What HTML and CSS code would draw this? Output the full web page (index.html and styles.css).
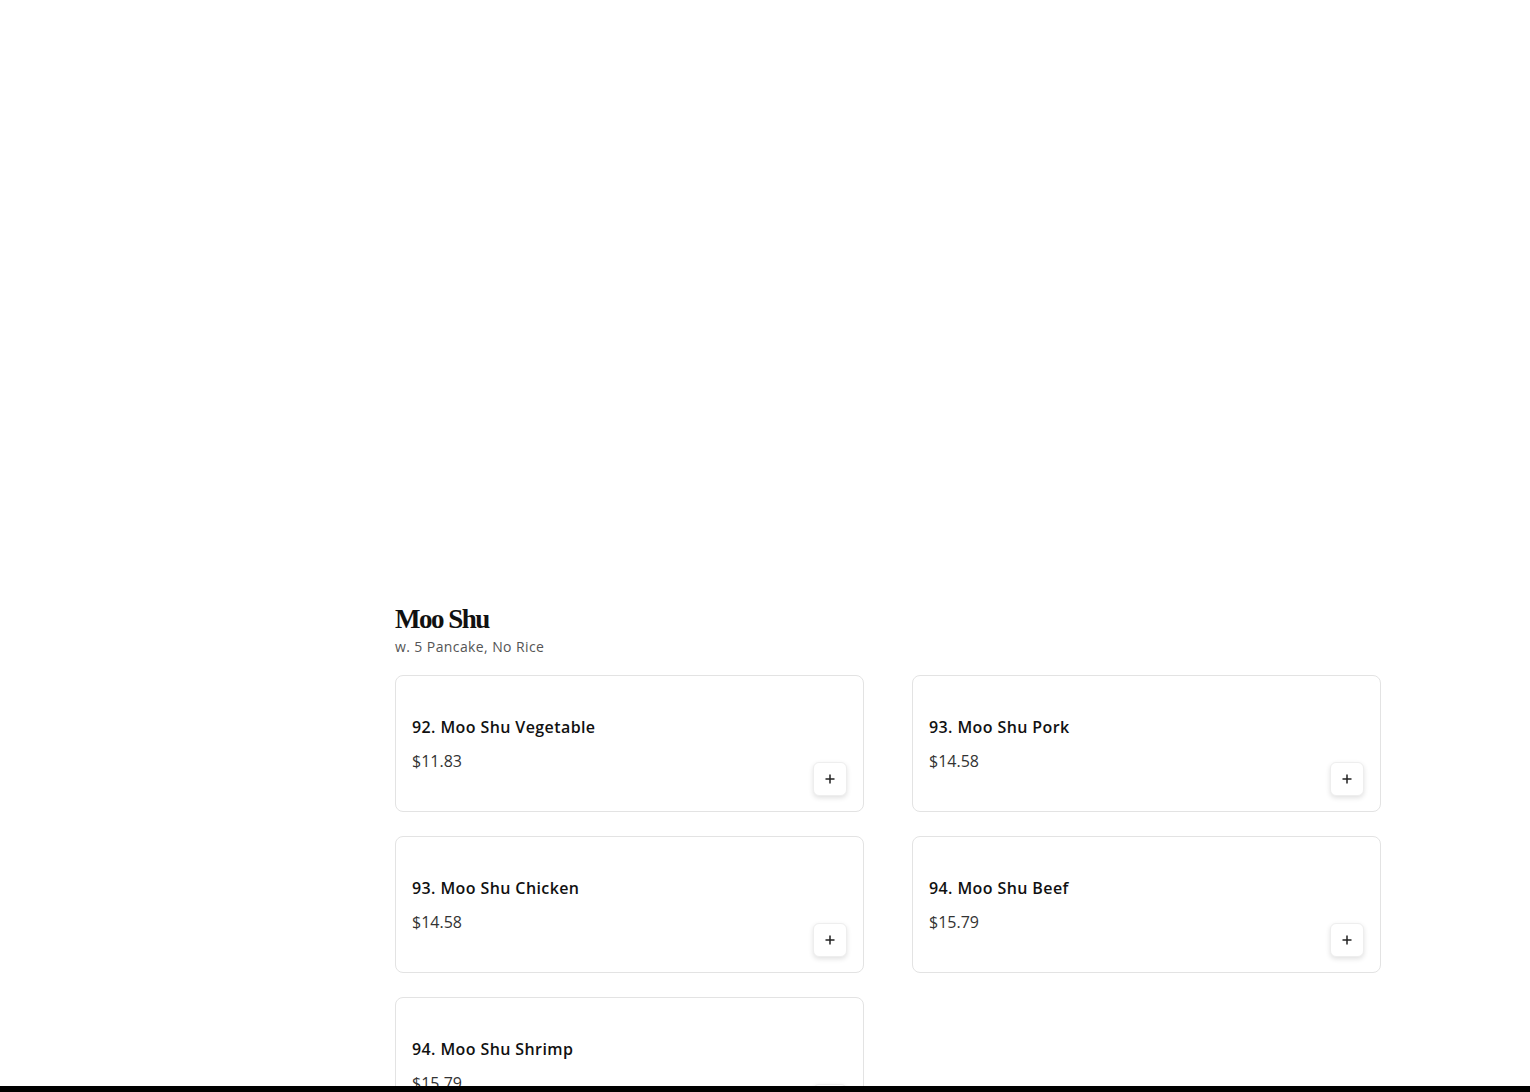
FILE: index.html
```html
<!DOCTYPE html>
<html lang="en">
<head>
    <meta charset="UTF-8">
    <meta name="viewport" content="width=device-width, initial-scale=1.0">
    <title>Menu - Moo Shu</title>
    <link rel="stylesheet" href="styles.css">
</head>
<body>
    <div class="hero"></div>

    <section class="category">
        <h2 class="category-title">Moo Shu</h2>
        <p class="category-note">w. 5 Pancake, No Rice</p>

        <div class="items">
            <div class="item">
                <div class="item-info">
                    <h3>92. Moo Shu Vegetable</h3>
                    <p class="price">$11.83</p>
                </div>
                <button class="add" aria-label="Add">
                    <svg width="12" height="12" viewBox="0 0 12 12"><path d="M6 1.5v9M1.5 6h9" stroke="#222" stroke-width="1.5" fill="none"/></svg>
                </button>
            </div>
            <div class="item">
                <div class="item-info">
                    <h3>93. Moo Shu Pork</h3>
                    <p class="price">$14.58</p>
                </div>
                <button class="add" aria-label="Add">
                    <svg width="12" height="12" viewBox="0 0 12 12"><path d="M6 1.5v9M1.5 6h9" stroke="#222" stroke-width="1.5" fill="none"/></svg>
                </button>
            </div>
            <div class="item">
                <div class="item-info">
                    <h3>93. Moo Shu Chicken</h3>
                    <p class="price">$14.58</p>
                </div>
                <button class="add" aria-label="Add">
                    <svg width="12" height="12" viewBox="0 0 12 12"><path d="M6 1.5v9M1.5 6h9" stroke="#222" stroke-width="1.5" fill="none"/></svg>
                </button>
            </div>
            <div class="item">
                <div class="item-info">
                    <h3>94. Moo Shu Beef</h3>
                    <p class="price">$15.79</p>
                </div>
                <button class="add" aria-label="Add">
                    <svg width="12" height="12" viewBox="0 0 12 12"><path d="M6 1.5v9M1.5 6h9" stroke="#222" stroke-width="1.5" fill="none"/></svg>
                </button>
            </div>
            <div class="item">
                <div class="item-info">
                    <h3>94. Moo Shu Shrimp</h3>
                    <p class="price">$15.79</p>
                </div>
                <button class="add" aria-label="Add">
                    <svg width="12" height="12" viewBox="0 0 12 12"><path d="M6 1.5v9M1.5 6h9" stroke="#222" stroke-width="1.5" fill="none"/></svg>
                </button>
            </div>
        </div>
    </section>

    <div class="cart-bar"></div>
</body>
</html>
```

FILE: styles.css
```css
body {
    font-family: "Open Sans", Arial, sans-serif;
    background-color: #fff;
    color: #1a1a1a;
    margin: 0;
}

.hero {
    height: 603px;
}

.category {
    width: 986px;
    margin-left: 395px;
    padding-bottom: 40px;
}

.category-title {
    font-family: "Liberation Serif", "DejaVu Serif", serif;
    font-weight: 900;
    font-size: 27px;
    letter-spacing: -1.5px;
    line-height: 33px;
    margin: 0;
    color: #111;
}

.category-note {
    font-size: 14px;
    letter-spacing: 0.4px;
    color: #555;
    margin: 0 0 17px;
    line-height: 22px;
}

.items {
    display: grid;
    grid-template-columns: 1fr 1fr;
    column-gap: 48px;
    row-gap: 24px;
}

.item {
    display: flex;
    align-items: center;
    justify-content: space-between;
    min-height: 137px;
    box-sizing: border-box;
    padding: 15px 16px;
    border: 1px solid #e3e3e3;
    border-radius: 8px;
}

.item-info h3 {
    font-size: 16px;
    font-weight: 600;
    letter-spacing: 0.4px;
    line-height: 24px;
    margin: 0 0 10px;
    color: #111;
}

.price {
    font-size: 16px;
    line-height: 24px;
    margin: 0;
    color: #333;
}

.add {
    align-self: flex-end;
    width: 34px;
    height: 34px;
    display: flex;
    align-items: center;
    justify-content: center;
    padding: 0;
    background-color: #fff;
    border: 1px solid #eee;
    border-radius: 6px;
    box-shadow: 0 2px 5px rgba(0, 0, 0, 0.12);
    cursor: pointer;
}

.cart-bar {
    position: fixed;
    left: 0;
    right: 0;
    bottom: 0;
    height: 6px;
    background-color: #000;
}
```
